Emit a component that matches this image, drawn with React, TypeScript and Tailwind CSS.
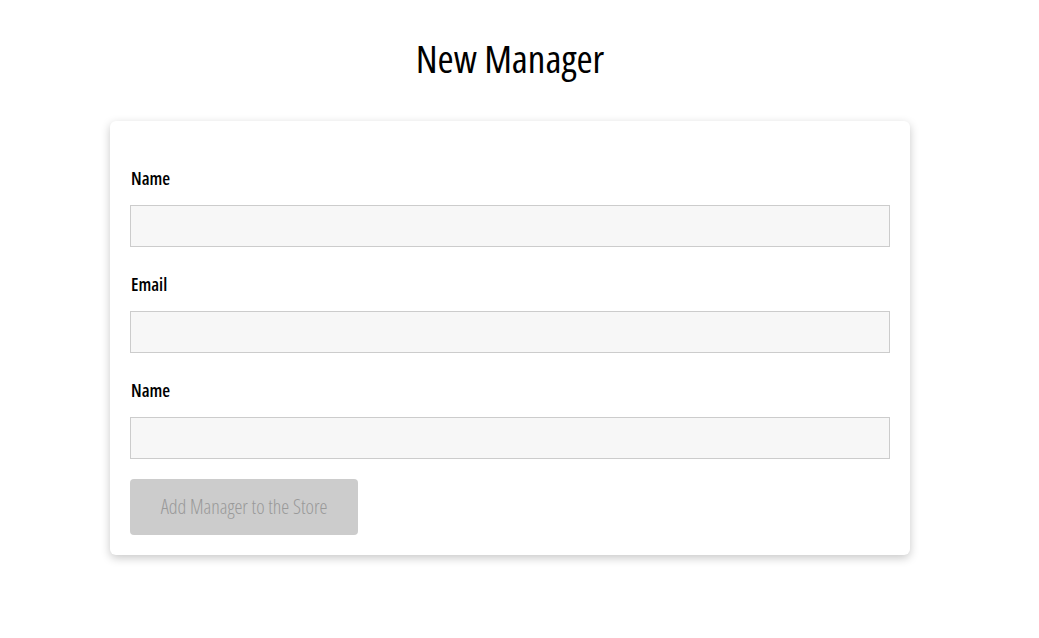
export default function App() {
  const fields = ["Name", "Email", "Name"];
  return (
    <div
      className="min-h-screen w-[1020px] bg-white pt-[30px] pb-20 text-black"
      style={{ fontFamily: '"Open Sans", "Noto Sans", sans-serif', fontStretch: "75%" }}
    >
      <h1 className="text-center text-[39px] leading-[56px] font-normal">New Manager</h1>
      <div className="mx-auto mt-[35px] w-[800px] rounded-md bg-white px-5 pt-[44px] pb-5 shadow-[0_3px_10px_rgba(0,0,0,0.22)]">
        {fields.map((f, i) => (
          <div key={i} className="mb-6">
            <label className="mb-[13px] block pl-px text-[18px] leading-[27px] font-semibold">{f}</label>
            <input
              type="text"
              className="block h-[42px] w-full border border-[#cccccc] bg-[#f7f7f7] px-3 outline-none"
            />
          </div>
        ))}
        <button
          disabled
          className="-mt-1 h-[56px] w-[228px] rounded bg-[#cccccc] text-[20px] font-light text-[#999999]"
        >
          Add Manager to the Store
        </button>
      </div>
    </div>
  );
}
